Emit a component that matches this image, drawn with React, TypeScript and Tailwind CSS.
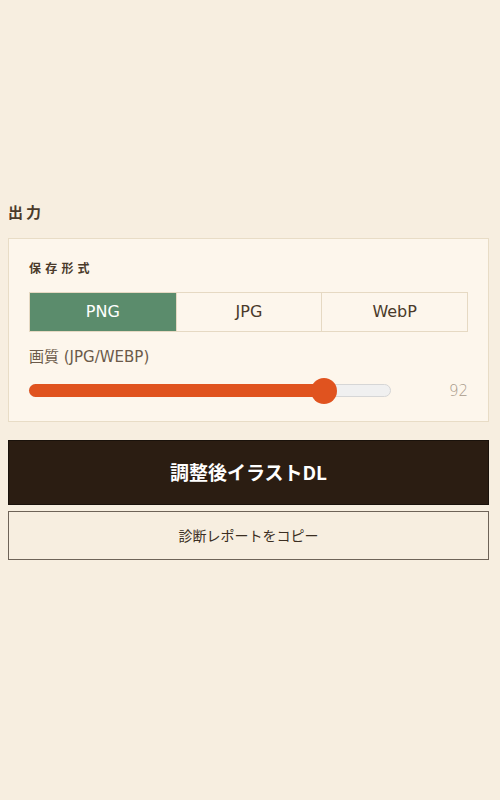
import { useState } from "react";

const FORMATS = ["PNG", "JPG", "WebP"];

export default function App() {
	const [format, setFormat] = useState("PNG");
	const [quality] = useState(92);
	const min = 50;
	const max = 100;
	const pct = (quality - min) / (max - min);

	return (
		<div
			className="min-h-[800px] w-full bg-[#f7eee0] pt-[202px] pl-2 pr-[11px] text-[#3b2e22]"
			style={{ fontFamily: '"DejaVu Sans", "Noto Sans CJK JP", sans-serif' }}
		>
			{/* Section title */}
			<h2 className="mb-[16px] font-['Noto_Sans_CJK_JP',sans-serif] text-[15px] font-bold leading-5 tracking-[0.2em] text-[#4a3a2a]">
				出力
			</h2>

			{/* Output settings card */}
			<div className="border border-[#e8dcc6] bg-[#fdf6ec] px-5 pt-[21px] pb-[17px]">
				<div className="mb-[16px] font-['Noto_Sans_CJK_JP',sans-serif] text-[12px] font-bold leading-4 tracking-[0.35em] text-[#4a3a2a]">
					保存形式
				</div>

				<div className="grid h-10 grid-cols-3 border border-[#e6d9c3]">
					{FORMATS.map((f, i) => (
						<button
							key={f}
							type="button"
							onClick={() => setFormat(f)}
							className={`flex items-center justify-center text-[16px] ${
								i > 0 ? "border-l border-[#e6d9c3]" : ""
							} ${
								format === f
									? "bg-[#5b8c6c] text-white"
									: "bg-[#fdf6ec] text-[#4a3a2a]"
							}`}
						>
							{f}
						</button>
					))}
				</div>

				<div className="mt-[15px] text-[15px] leading-5 text-[#6b5a4a]">
					画質 (JPG/WEBP)
				</div>

				{/* Quality slider */}
				<div className="mt-[11px] flex items-center">
					<div className="relative h-[26px] w-[362px]">
						<div className="absolute top-[6px] left-0 h-[13px] w-full rounded-full border border-[#d6d6d6] bg-[#f0f0f0]" />
						<div
							className="absolute top-[6px] left-0 h-[13px] rounded-full bg-[#e0531f]"
							style={{ width: `${13 + pct * 336}px` }}
						/>
						<div
							className="absolute top-0 h-[26px] w-[26px] rounded-full bg-[#e0531f]"
							style={{ left: `${pct * 336}px` }}
						/>
					</div>
					<div className="ml-auto text-[15px] font-extralight text-[#a89a8b]">
						{quality}
					</div>
				</div>
			</div>

			{/* Actions */}
			<button
				type="button"
				className="mt-[18px] flex h-[65px] w-full items-center justify-center border border-[#1a120b] bg-[#2b1d12] font-['Noto_Sans_CJK_JP',sans-serif] text-[19px] font-bold text-white"
			>
				調整後イラストDL
			</button>
			<button
				type="button"
				className="mt-[6px] flex h-[49px] w-full items-center justify-center border-[1.5px] border-[#6e6358] bg-transparent font-['Noto_Sans_CJK_JP',sans-serif] text-[14px] text-[#3b2e22]"
			>
				診断レポートをコピー
			</button>
		</div>
	);
}
